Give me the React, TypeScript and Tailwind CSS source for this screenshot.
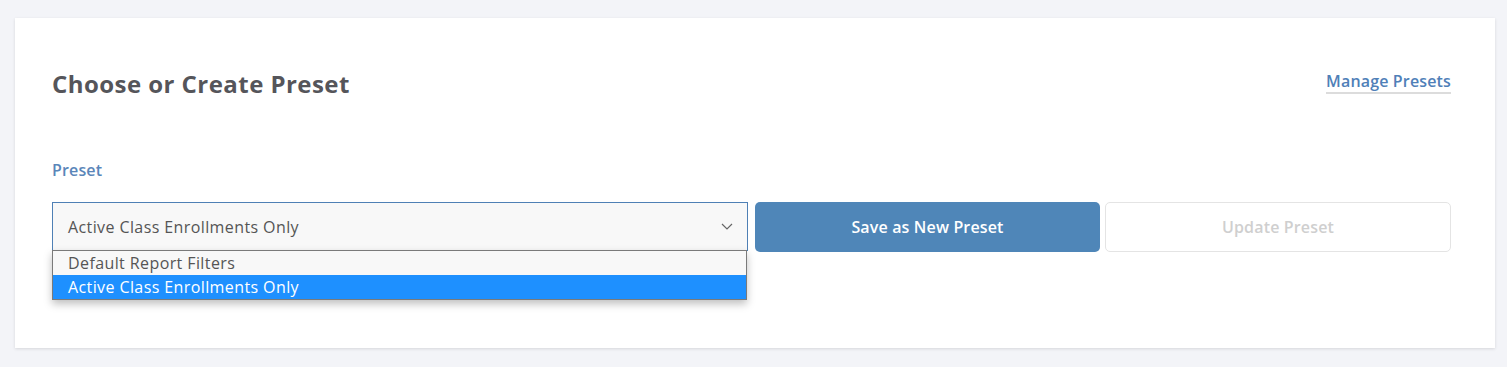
import React from "react";

export default function App() {
  return (
    <div
      className="w-[1507px] h-[367px] bg-[#f3f4f8] pt-[18px] pl-[15px]"
      style={{ fontFamily: '"Open Sans", "Liberation Sans", sans-serif' }}
    >
      <div className="w-[1480px] h-[330px] bg-white shadow-[0_1px_3px_rgba(0,0,0,0.12)] pt-[50px] pl-[37px] pr-[44px]">
        <div className="flex items-start justify-between">
          <h1 className="text-[24px] leading-[32px] font-bold tracking-[0.45px] text-[#55555a]">
            Choose or Create Preset
          </h1>
          <a
            href="#"
            className="mt-[2px] text-[16px] leading-[22px] font-semibold tracking-[0.15px] text-[#4f80b8] border-b-2 border-[#dcdcdc]"
          >
            Manage Presets
          </a>
        </div>
        <div className="mt-[58px] text-[16px] leading-[24px] font-semibold tracking-[0.15px] text-[#5a86b9]">
          Preset
        </div>
        <div className="mt-[20px] flex items-start">
          <div className="relative w-[696px]">
            <div className="h-[49px] bg-[#f8f8f8] border border-[#4f80b5] flex items-center justify-between pl-[15px] pr-[14px]">
              <span className="text-[16px] leading-[24px] tracking-[0.4px] text-[#555]">
                Active Class Enrollments Only
              </span>
              <svg width="12" height="7" viewBox="0 0 12 7" fill="none">
                <polyline
                  points="1,1 6,6 11,1"
                  stroke="#666"
                  strokeWidth="1.2"
                  fill="none"
                />
              </svg>
            </div>
            <div className="absolute left-0 top-[48px] w-[695px] border border-[#7a7a7a] bg-white shadow-[0_4px_8px_rgba(0,0,0,0.25)]">
              <div className="h-[24px] leading-[24px] pl-[15px] text-[16px] tracking-[0.4px] text-[#555] bg-[#f8f8f8]">
                Default Report Filters
              </div>
              <div className="h-[24px] leading-[24px] pl-[15px] text-[16px] tracking-[0.4px] text-white bg-[#1e90ff]">
                Active Class Enrollments Only
              </div>
            </div>
          </div>
          <button className="ml-[7px] w-[345px] h-[50px] rounded-[5px] bg-[#4f86b8] text-white text-[16px] font-semibold tracking-[0.15px]">
            Save as New Preset
          </button>
          <button className="ml-[5px] w-[346px] h-[50px] rounded-[5px] bg-white border border-[#e4e4e4] text-[#cfcfcf] text-[16px] font-semibold tracking-[0.15px]">
            Update Preset
          </button>
        </div>
      </div>
    </div>
  );
}
